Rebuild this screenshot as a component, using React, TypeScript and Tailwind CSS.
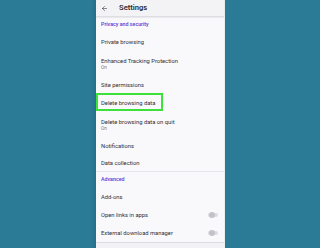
import { ArrowLeft } from 'lucide-react';

type Item = { title: string; sub?: string; toggle?: boolean; h?: string };

const privacy: Item[] = [
  { title: 'Private browsing' },
  { title: 'Enhanced Tracking Protection', sub: 'On' },
  { title: 'Site permissions' },
  { title: 'Delete browsing data' },
  { title: 'Delete browsing data on quit', sub: 'On' },
  { title: 'Notifications' },
  { title: 'Data collection', h: 'h-[16px]' },
];

const advanced: Item[] = [
  { title: 'Add-ons' },
  { title: 'Open links in apps', toggle: true },
  { title: 'External download manager', toggle: true },
];

const Toggle = () => (
  <div className="relative mr-[6px] h-[4px] w-[10px] rounded-full bg-[#dcdce1]">
    <div className="absolute left-[1px] top-[-1px] h-[6px] w-[6px] rounded-full bg-[#c2c2c8]" />
  </div>
);

const Row = ({ item, highlight }: { item: Item; highlight?: boolean }) => {
  if (item.sub) {
    return (
      <div className="flex h-[25px] flex-col justify-center pl-[5px] pt-[1px]">
        <div className="text-[5.8px] leading-[7px] text-[#2f2e36]">{item.title}</div>
        <div className="text-[4.6px] leading-[6px] text-[#75747b]">{item.sub}</div>
      </div>
    );
  }
  return (
    <div className={`relative flex ${item.h ?? 'h-[18px]'} items-center justify-between pl-[5px]`}>
      <span className="text-[5.8px] text-[#2f2e36]">{item.title}</span>
      {item.toggle && <Toggle />}
      {highlight && (
        <div className="absolute left-[0px] top-[-1px] h-[18px] w-[67px] border-2 border-[#3ce23a]" />
      )}
    </div>
  );
};

const SectionHeader = ({ label }: { label: string }) => (
  <div className="flex h-[16px] items-center pl-[5px] text-[5.3px] font-medium text-[#5b37d6]">
    {label}
  </div>
);

export default function App() {
  return (
    <div
      className="flex h-[248px] w-[320px] overflow-hidden bg-[#2c7b96] pl-[90px]"
      style={{ fontFamily: 'Roboto, "Noto Sans", sans-serif' }}
    >
      <div className="h-full w-[6px] bg-gradient-to-r from-[#2c7b96] to-[#24708a]" />
      <div className="flex h-full w-[129px] flex-col border-r border-[#e8eef1] bg-[#f9f9fb]">
        <div className="flex h-[17px] items-center border-b border-[#dedee3] bg-[#f3f3f6] pl-[5px] shadow-[0_1px_1px_rgba(0,0,0,0.06)]">
          <ArrowLeft size={7} strokeWidth={2} className="text-[#3a3944]" />
          <span className="ml-[11px] text-[7.6px] font-semibold text-[#2b2a33]">Settings</span>
        </div>
        <SectionHeader label="Privacy and security" />
        {privacy.map((item, i) => (
          <Row key={item.title} item={item} highlight={i === 3} />
        ))}
        <div className="h-px bg-[#e5e5ea]" />
        <SectionHeader label="Advanced" />
        {advanced.map((item) => (
          <Row key={item.title} item={item} />
        ))}
        <div className="h-px bg-[#dcdce1]" />
        <div className="flex-1 bg-[#f2f2f5]" />
      </div>
    </div>
  );
}
